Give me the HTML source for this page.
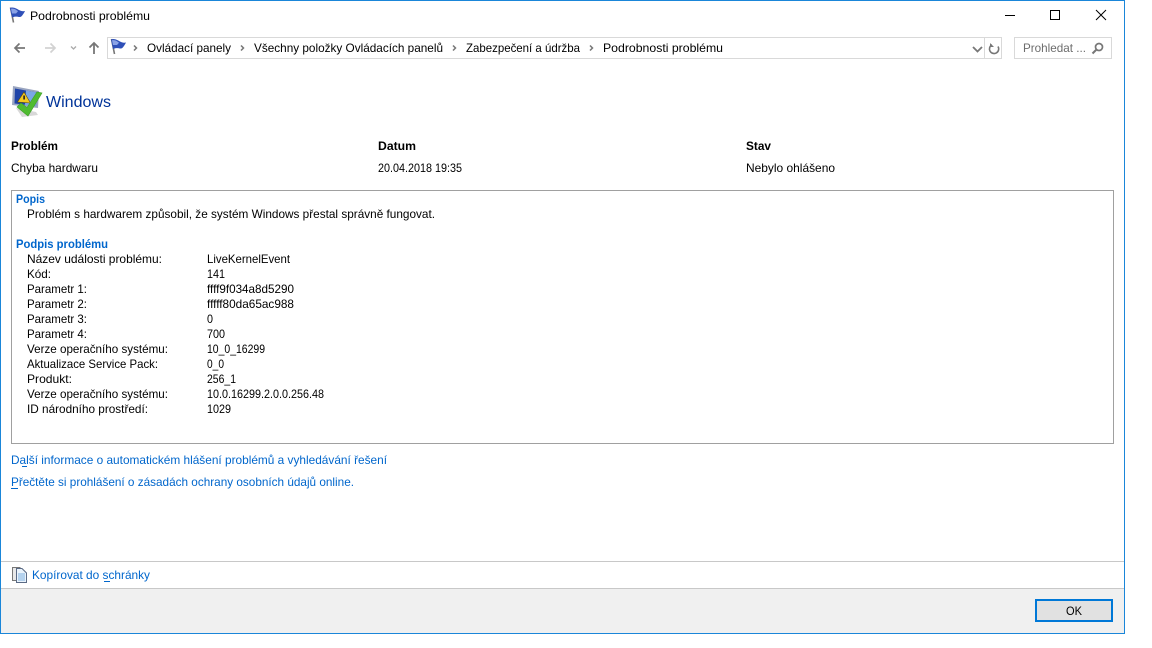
<!DOCTYPE html>
<html><head><meta charset="utf-8"><style>
html,body{margin:0;padding:0;background:#fff;width:1152px;height:648px;overflow:hidden}
svg{display:block}
text{font-family:"Liberation Sans",sans-serif;font-size:12px;fill:#000}
.b{font-weight:bold}
.l{fill:#0066cc}
.h{fill:#0066cc;font-weight:bold}
</style></head><body>
<svg width="1152" height="648" viewBox="0 0 1152 648">
<defs>
<g id="flag">
<path d="M1.500 0.500L4.500 15.500" stroke="#777" stroke-width="1.600" fill="none"/>
<path d="M1 1C4 -0.500 7.500 1.500 10 3C12 4.200 14 4.500 16 4C15 6 13.500 8.500 12 9.800C9.500 10.500 7 8.500 3 10.500Z" fill="#2f50b8"/>
<path d="M2 1.800C5 1 7.500 3 9 4.200L7 6.500L3 6.500Z" fill="#8aa2e6"/>
</g>
</defs>
<rect x="0.5" y="0.5" width="1124" height="633" fill="#fff" stroke="#1a86d9"/>
<rect x="0" y="0" width="1125" height="1" fill="#1a86d9"/>
<rect x="0" y="0" width="1" height="634" fill="#1a86d9"/>

<use href="#flag" x="9" y="7"/>
<text x="30" y="20" textLength="120" lengthAdjust="spacingAndGlyphs">Podrobnosti problému</text>

<rect x="1005" y="15" width="10" height="1" fill="#000"/>
<rect x="1050.5" y="10.5" width="9" height="9" fill="none" stroke="#000"/>
<path d="M1096 10L1106 20M1106 10L1096 20" stroke="#000" stroke-width="1" fill="none"/>

<path d="M25 48H15M19.500 43.500L15 48L19.500 52.500" stroke="#777" stroke-width="1.700" fill="none"/>
<path d="M55 48H45M50.500 43.500L55 48L50.500 52.500" stroke="#d2d2d2" stroke-width="1.700" fill="none"/>
<path d="M71 46.500L73.500 49L76 46.500" stroke="#aaa" stroke-width="1.300" fill="none"/>
<path d="M94 54V43M89.500 47.500L94 43L98.500 47.500" stroke="#777" stroke-width="1.800" fill="none"/>

<rect x="107.500" y="37.500" width="894" height="21" fill="#fff" stroke="#d9d9d9"/>
<line x1="984.500" y1="38" x2="984.500" y2="58" stroke="#d9d9d9"/>
<use href="#flag" x="110" y="38.500"/>
<g fill="none" stroke="#777" stroke-width="1.500">
<path d="M134 45.500L136.500 48L134 50.500"/>
<path d="M241 45.500L243.500 48L241 50.500"/>
<path d="M453 45.500L455.500 48L453 50.500"/>
<path d="M590 45.500L592.500 48L590 50.500"/>
</g>
<text x="147" y="52" textLength="84" lengthAdjust="spacingAndGlyphs">Ovládací panely</text>
<text x="254" y="52" textLength="189" lengthAdjust="spacingAndGlyphs">Všechny položky Ovládacích panelů</text>
<text x="466" y="52" textLength="114" lengthAdjust="spacingAndGlyphs">Zabezpečení a údržba</text>
<text x="603" y="52" textLength="120" lengthAdjust="spacingAndGlyphs">Podrobnosti problému</text>
<path d="M973 47L977.500 51.500L982 47" stroke="#777" stroke-width="1.800" fill="none"/>
<path d="M992 44.800A4.600 4.600 0 1 0 998 46.500" stroke="#777" stroke-width="1.600" fill="none"/>
<path d="M990 43V47H994Z" fill="#777"/>
<rect x="1014.500" y="37.500" width="97" height="21" fill="#fff" stroke="#d9d9d9"/>
<text x="1023" y="52" textLength="63" lengthAdjust="spacingAndGlyphs" style="fill:#6d6d6d">Prohledat ...</text>
<circle cx="1099" cy="47" r="3.500" fill="none" stroke="#777" stroke-width="1.700"/>
<path d="M1096.500 49.500L1092.500 53.500" stroke="#777" stroke-width="2"/>

<path d="M13 86L39 91L38 108L12 105Z" fill="#9aa5c0"/>
<path d="M15 88.500L37 92.500L36 106L14.500 103.500Z" fill="#1f44a8"/>
<path d="M26 90.500L37 92.500L36 106L25 105Z" fill="#7aa6e6"/>
<path d="M24 92L30.500 103L17.500 102Z" fill="#f4c91f" stroke="#5a4a10" stroke-width=".6"/>
<rect x="23.300" y="95.500" width="1.600" height="4" fill="#222"/>
<path d="M16 108L36 112L38 115L22 117Z" fill="#d8d8d8"/>
<path d="M17 107L21 103L27 107.500L37 92L42 93L28 116Z" fill="#4fbb30" stroke="#3f9e28" stroke-width=".6"/>
<text x="46" y="107" textLength="65" lengthAdjust="spacingAndGlyphs" style="font-size:15.500px;fill:#003399">Windows</text>

<text class="b" x="11" y="150" textLength="47" lengthAdjust="spacingAndGlyphs">Problém</text>
<text class="b" x="378" y="150" textLength="38" lengthAdjust="spacingAndGlyphs">Datum</text>
<text class="b" x="746" y="150" textLength="25" lengthAdjust="spacingAndGlyphs">Stav</text>
<text x="11" y="172" textLength="87" lengthAdjust="spacingAndGlyphs">Chyba hardwaru</text>
<text x="378" y="172" textLength="84" lengthAdjust="spacingAndGlyphs">20.04.2018 19:35</text>
<text x="746" y="172" textLength="89" lengthAdjust="spacingAndGlyphs">Nebylo ohlášeno</text>

<rect x="11.500" y="190.500" width="1102" height="253" fill="#fff" stroke="#a0a0a0"/>
<text class="h" x="16" y="203" textLength="29" lengthAdjust="spacingAndGlyphs">Popis</text>
<text x="27" y="218" textLength="408" lengthAdjust="spacingAndGlyphs">Problém s hardwarem způsobil, že systém Windows přestal správně fungovat.</text>
<text class="h" x="16" y="248" textLength="92" lengthAdjust="spacingAndGlyphs">Podpis problému</text>

<text x="27" y="263" textLength="135" lengthAdjust="spacingAndGlyphs">Název události problému:</text>
<text x="207" y="263" textLength="83" lengthAdjust="spacingAndGlyphs">LiveKernelEvent</text>
<text x="27" y="278" textLength="24" lengthAdjust="spacingAndGlyphs">Kód:</text>
<text x="207" y="278" textLength="18" lengthAdjust="spacingAndGlyphs">141</text>
<text x="27" y="293" textLength="60" lengthAdjust="spacingAndGlyphs">Parametr 1:</text>
<text x="207" y="293" textLength="87" lengthAdjust="spacingAndGlyphs">ffff9f034a8d5290</text>
<text x="27" y="308" textLength="60" lengthAdjust="spacingAndGlyphs">Parametr 2:</text>
<text x="207" y="308" textLength="87" lengthAdjust="spacingAndGlyphs">fffff80da65ac988</text>
<text x="27" y="323" textLength="60" lengthAdjust="spacingAndGlyphs">Parametr 3:</text>
<text x="207" y="323" textLength="6" lengthAdjust="spacingAndGlyphs">0</text>
<text x="27" y="338" textLength="60" lengthAdjust="spacingAndGlyphs">Parametr 4:</text>
<text x="207" y="338" textLength="18" lengthAdjust="spacingAndGlyphs">700</text>
<text x="27" y="353" textLength="141" lengthAdjust="spacingAndGlyphs">Verze operačního systému:</text>
<text x="207" y="353" textLength="58" lengthAdjust="spacingAndGlyphs">10_0_16299</text>
<text x="27" y="368" textLength="131" lengthAdjust="spacingAndGlyphs">Aktualizace Service Pack:</text>
<text x="207" y="368" textLength="17" lengthAdjust="spacingAndGlyphs">0_0</text>
<text x="27" y="383" textLength="45" lengthAdjust="spacingAndGlyphs">Produkt:</text>
<text x="207" y="383" textLength="29" lengthAdjust="spacingAndGlyphs">256_1</text>
<text x="27" y="398" textLength="141" lengthAdjust="spacingAndGlyphs">Verze operačního systému:</text>
<text x="207" y="398" textLength="117" lengthAdjust="spacingAndGlyphs">10.0.16299.2.0.0.256.48</text>
<text x="27" y="413" textLength="121" lengthAdjust="spacingAndGlyphs">ID národního prostředí:</text>
<text x="207" y="413" textLength="24" lengthAdjust="spacingAndGlyphs">1029</text>

<text class="l" x="11" y="464" textLength="376" lengthAdjust="spacingAndGlyphs">Další informace o automatickém hlášení problémů a vyhledávání řešení</text>
<rect x="22" y="466" width="5" height="1" fill="#0066cc"/>
<text class="l" x="11" y="486" textLength="343" lengthAdjust="spacingAndGlyphs">Přečtěte si prohlášení o zásadách ochrany osobních údajů online.</text>
<rect x="11" y="488" width="7" height="1" fill="#0066cc"/>

<rect x="1" y="561" width="1123" height="1" fill="#c8c8c8"/>
<path d="M12.500 567.500H20V580.500H12.500Z" fill="#e8e8e8" stroke="#777"/>
<path d="M16.500 568.500H22L26.500 573V582.500H16.500Z" fill="#eaf3fb" stroke="#5a6a85"/>
<path d="M18 574H25M18 576H25M18 578H25M18 580H25" stroke="#7fb0e0"/>
<text class="l" x="32" y="579" textLength="118" lengthAdjust="spacingAndGlyphs">Kopírovat do schránky</text>
<rect x="104" y="581" width="6" height="1" fill="#0066cc"/>

<rect x="1" y="588" width="1123" height="45" fill="#f0f0f0"/>
<rect x="1" y="588" width="1123" height="1" fill="#c8c8c8"/>
<rect x="1036" y="600" width="76" height="21" fill="#e1e1e1" stroke="#0078d7" stroke-width="2"/>
<text x="1066" y="615" textLength="16" lengthAdjust="spacingAndGlyphs">OK</text>
</svg>
</body></html>
